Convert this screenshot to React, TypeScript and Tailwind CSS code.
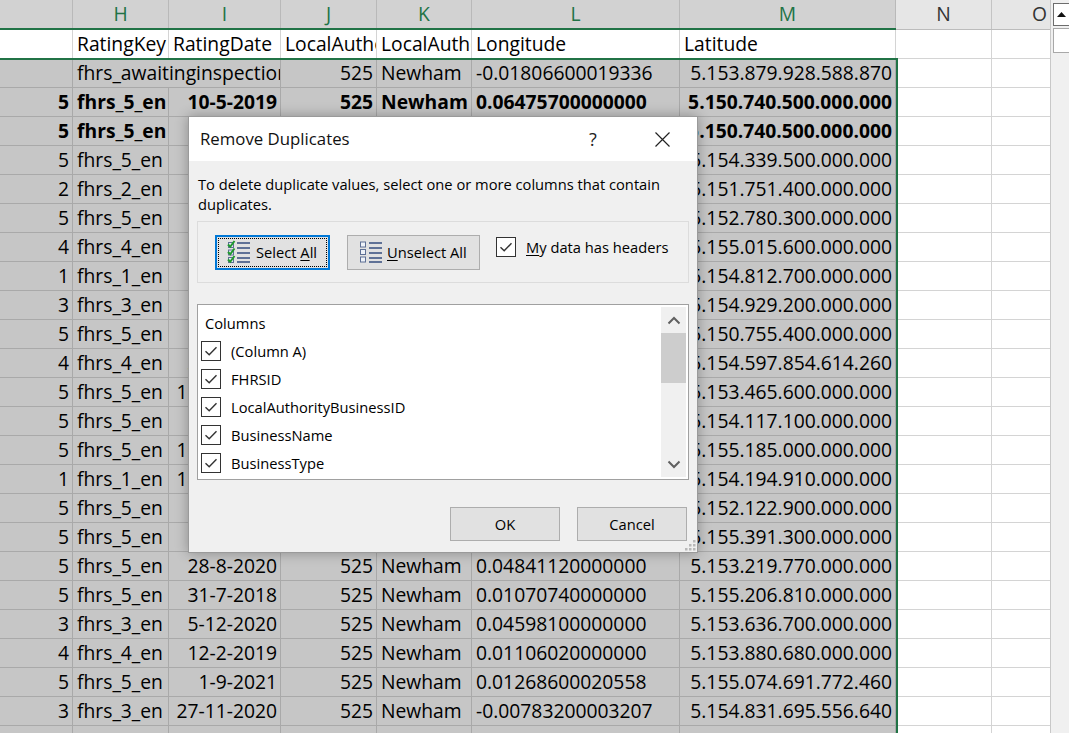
import React from "react"

const SHEET_FONT = { fontFamily: '"Open Sans", "Noto Sans", sans-serif' }
const UI_FONT = { fontFamily: '"Open Sans", "Noto Sans", sans-serif' }

type Row = [string, string, string, string, string, string, string]

const ROWS: Row[] = [
  ["", "fhrs_awaitinginspection", "", "525", "Newham", "-0.01806600019336", "5.153.879.928.588.870"],
  ["5", "fhrs_5_en", "10-5-2019", "525", "Newham", "0.06475700000000", "5.150.740.500.000.000"],
  ["5", "fhrs_5_en", "10-5-2019", "525", "Newham", "0.06475700000000", "5.150.740.500.000.000"],
  ["5", "fhrs_5_en", "8-3-2019", "525", "Newham", "0.03970600000000", "5.154.339.500.000.000"],
  ["2", "fhrs_2_en", "6-11-2019", "525", "Newham", "0.05437200000000", "5.151.751.400.000.000"],
  ["5", "fhrs_5_en", "4-3-2019", "525", "Newham", "0.02587400000000", "5.152.780.300.000.000"],
  ["4", "fhrs_4_en", "8-10-2019", "525", "Newham", "0.04226300000000", "5.155.015.600.000.000"],
  ["1", "fhrs_1_en", "7-6-2021", "525", "Newham", "0.03371400000000", "5.154.812.700.000.000"],
  ["3", "fhrs_3_en", "2-5-2019", "525", "Newham", "0.02415500000000", "5.154.929.200.000.000"],
  ["5", "fhrs_5_en", "5-12-2019", "525", "Newham", "0.06652100000000", "5.150.755.400.000.000"],
  ["4", "fhrs_4_en", "3-12-2019", "525", "Newham", "0.05183725309372", "5.154.597.854.614.260"],
  ["5", "fhrs_5_en", "11-12-2019", "525", "Newham", "0.00898600000000", "5.153.465.600.000.000"],
  ["5", "fhrs_5_en", "9-8-2019", "525", "Newham", "0.03044100000000", "5.154.117.100.000.000"],
  ["5", "fhrs_5_en", "10-10-2019", "525", "Newham", "0.01915800000000", "5.155.185.000.000.000"],
  ["1", "fhrs_1_en", "18-11-2019", "525", "Newham", "0.05514700000000", "5.154.194.910.000.000"],
  ["5", "fhrs_5_en", "1-3-2020", "525", "Newham", "0.04312600000000", "5.152.122.900.000.000"],
  ["5", "fhrs_5_en", "4-8-2021", "525", "Newham", "0.02256800000000", "5.155.391.300.000.000"],
  ["5", "fhrs_5_en", "28-8-2020", "525", "Newham", "0.04841120000000", "5.153.219.770.000.000"],
  ["5", "fhrs_5_en", "31-7-2018", "525", "Newham", "0.01070740000000", "5.155.206.810.000.000"],
  ["3", "fhrs_3_en", "5-12-2020", "525", "Newham", "0.04598100000000", "5.153.636.700.000.000"],
  ["4", "fhrs_4_en", "12-2-2019", "525", "Newham", "0.01106020000000", "5.153.880.680.000.000"],
  ["5", "fhrs_5_en", "1-9-2021", "525", "Newham", "0.01268600020558", "5.155.074.691.772.460"],
  ["3", "fhrs_3_en", "27-11-2020", "525", "Newham", "-0.00783200003207", "5.154.831.695.556.640"],
  ["", "", "", "", "", "", ""],
]

const COLUMN_LIST = ["(Column A)", "FHRSID", "LocalAuthorityBusinessID", "BusinessName", "BusinessType"]

const cellBase = "shrink-0 h-full overflow-hidden whitespace-nowrap flex items-center border-r border-b"
const selCell = `${cellBase} bg-[#c6c6c6] border-[#a9a9a9]`
const whiteCell = `${cellBase} bg-white border-[#d4d4d4]`

function DataRow({ row, bold }: { row: Row; bold?: boolean }) {
  const [g, h, i, j, k, l, m] = row
  const c = selCell
  const span = i === "" && h.length > 14
  return (
    <div className={`flex h-[29px] text-[19.3px] text-black ${bold ? "font-bold" : ""}`}>
      <div className={`${c} w-[73px] justify-end pr-[3px]`}>{g}</div>
      {span ? (
        <div className={`${c} w-[208px] pl-[4px]`}>{h}</div>
      ) : (
        <>
          <div className={`${c} w-[96px] pl-[4px]`}>{h}</div>
          <div className={`${c} w-[112px] justify-end pr-[3px]`}>{i}</div>
        </>
      )}
      <div className={`${c} w-[96px] justify-end pr-[3px]`}>{j}</div>
      <div className={`${c} w-[95px] pl-[4px]`}>{k}</div>
      <div className={`${c} w-[208px] pl-[4px]`}>{l}</div>
      <div className={`${c} w-[216px] justify-end pr-[3px]`}>{m}</div>
      <div className={`${whiteCell} w-[96px]`} />
      <div className={`${whiteCell} w-[96px]`} />
    </div>
  )
}

function HeaderRow() {
  const sel = "shrink-0 h-full flex items-center justify-center border-r border-[#b9b9b9] bg-[#d2d2d2] text-[#217346]"
  const plain = "shrink-0 h-full flex items-center justify-center border-r border-[#c4c4c4] bg-[#e6e6e6] text-[#333]"
  return (
    <div className="flex h-[30px] text-[19.3px]">
      <div className="flex border-b-2 border-[#217346]">
        <div className={`${sel} w-[73px]`} />
        <div className={`${sel} w-[96px]`}>H</div>
        <div className={`${sel} w-[112px]`}>I</div>
        <div className={`${sel} w-[96px]`}>J</div>
        <div className={`${sel} w-[95px]`}>K</div>
        <div className={`${sel} w-[208px]`}>L</div>
        <div className={`${sel} w-[216px]`}>M</div>
      </div>
      <div className="flex border-b border-[#bcbcbc]">
        <div className={`${plain} w-[96px]`}>N</div>
        <div className={`${plain} w-[96px]`}>O</div>
      </div>
    </div>
  )
}

function TitleRow() {
  const c = whiteCell
  return (
    <div className="flex h-[29px] text-[19.3px] text-black">
      <div className={`${c} w-[73px]`} />
      <div className={`${c} w-[96px] pl-[4px]`}>RatingKey</div>
      <div className={`${c} w-[112px] pl-[4px]`}>RatingDate</div>
      <div className={`${c} w-[96px] pl-[4px]`}>LocalAuthorityCode</div>
      <div className={`${c} w-[95px] pl-[4px]`}>LocalAuthorityName</div>
      <div className={`${c} w-[208px] pl-[4px]`}>Longitude</div>
      <div className={`${c} w-[216px] pl-[4px]`}>Latitude</div>
      <div className={`${c} w-[96px]`} />
      <div className={`${c} w-[96px]`} />
    </div>
  )
}

function SelectAllIcon() {
  return (
    <svg width="24" height="24" viewBox="0 0 24 24">
      {[1, 8.5, 16].map((y) => (
        <g key={y}>
          <rect x="1.5" y={y + 1.5} width="5" height="5" fill="#dfe6f2" stroke="#5d6f94" strokeWidth="1" />
          <path d={`M1 ${y + 3.5} L3.2 ${y + 5.8} L7.5 ${y}`} fill="none" stroke="#1f9a2c" strokeWidth="2" />
        </g>
      ))}
      {[2, 7, 12, 17, 21].map((y) => (
        <rect key={y} x="10" y={y} width="13" height="2" fill="#5f7196" />
      ))}
    </svg>
  )
}

function UnselectAllIcon() {
  return (
    <svg width="24" height="24" viewBox="0 0 24 24">
      {[2, 9.5, 17].map((y) => (
        <rect key={y} x="1.5" y={y} width="5" height="5" fill="#eef2f8" stroke="#5d6f94" strokeWidth="1" />
      ))}
      {[2, 7, 12, 17, 21].map((y) => (
        <rect key={y} x="10" y={y} width="13" height="2" fill="#5f7196" />
      ))}
    </svg>
  )
}

function CheckBox() {
  return (
    <svg width="20" height="20" viewBox="0 0 20 20" className="shrink-0">
      <rect x="0.5" y="0.5" width="19" height="19" fill="white" stroke="#333" strokeWidth="1" />
      <path d="M4.5 10.2 L8.2 13.8 L15.5 6.3" fill="none" stroke="#333" strokeWidth="1.4" />
    </svg>
  )
}

function Chevron({ up }: { up?: boolean }) {
  return (
    <svg width="14" height="9" viewBox="0 0 14 9">
      <path d={up ? "M1.5 7.5 L7 2 L12.5 7.5" : "M1.5 1.5 L7 7 L12.5 1.5"} fill="none" stroke="#606060" strokeWidth="2" />
    </svg>
  )
}

function Dialog() {
  return (
    <div
      className="absolute left-[188px] top-[116px] flex h-[437px] w-[510px] flex-col border border-[#9a9a9a] bg-[#f0f0f0] text-[14.7px] text-black shadow-[0_0_12px_rgba(0,0,0,0.3)]"
      style={UI_FONT}
    >
      {/* title bar */}
      <div className="flex h-[44px] shrink-0 items-center bg-white pl-[11px] pr-[12px]">
        <span className="text-[16.8px] text-[#111]">Remove Duplicates</span>
        <div className="flex-1" />
        <div className="flex h-[30px] w-[46px] items-center justify-center text-[18px] text-[#222]">?</div>
        <div className="ml-[23px] flex h-[30px] w-[46px] items-center justify-center">
          <svg width="15" height="15" viewBox="0 0 15 15">
            <path d="M0.5 0.5 L14.5 14.5 M14.5 0.5 L0.5 14.5" stroke="#222" strokeWidth="1.2" />
          </svg>
        </div>
      </div>

      <div className="flex flex-1 flex-col px-[8px]">
        <p className="pl-[1px] pt-[13px] leading-[20px]">
          To delete duplicate values, select one or more columns that contain duplicates.
        </p>

        {/* options group */}
        <div className="mt-[7px] flex h-[62px] items-center border border-[#dcdcdc] pl-[17px]">
          <div className="flex h-[35px] w-[115px] items-center border-2 border-[#0078d7] bg-[#e1e1e1] p-[1px]">
            <div className="flex h-full w-full items-center border border-dotted border-black pl-[8px]">
              <SelectAllIcon />
              <span className="ml-[5px]">
                Select <span className="underline underline-offset-2">A</span>ll
              </span>
            </div>
          </div>
          <div className="ml-[17px] flex h-[35px] w-[133px] items-center border border-[#adadad] bg-[#e1e1e1] pl-[11px]">
            <UnselectAllIcon />
            <span className="ml-[4px]">
              <span className="underline underline-offset-2">U</span>nselect All
            </span>
          </div>
          <div className="mb-[10px] ml-[16px] flex items-center">
            <CheckBox />
            <span className="ml-[10px]">
              <span className="underline underline-offset-2">M</span>y data has headers
            </span>
          </div>
        </div>

        {/* columns list */}
        <div className="mt-[21px] flex h-[176px] border border-[#a0a0a0] bg-white">
          <div className="flex-1 pt-[4px]">
            <div className="flex h-[28px] items-center pl-[7px]">Columns</div>
            {COLUMN_LIST.map((name) => (
              <div key={name} className="flex h-[28px] items-center pl-[3px]">
                <CheckBox />
                <span className="ml-[10px]">{name}</span>
              </div>
            ))}
          </div>
          <div className="my-[2px] mr-[2px] flex w-[25px] flex-col bg-[#f0f0f0]">
            <div className="flex h-[26px] items-center justify-center">
              <Chevron up />
            </div>
            <div className="h-[50px] bg-[#cdcdcd]" />
            <div className="flex-1" />
            <div className="flex h-[26px] items-center justify-center">
              <Chevron />
            </div>
          </div>
        </div>

        {/* buttons */}
        <div className="mt-[27px] flex justify-end gap-[17px] pr-[2px]">
          <div className="flex h-[34px] w-[110px] items-center justify-center border border-[#adadad] bg-[#e1e1e1]">OK</div>
          <div className="flex h-[34px] w-[110px] items-center justify-center border border-[#adadad] bg-[#e1e1e1]">Cancel</div>
        </div>
      </div>

      {/* resize grip */}
      <svg width="12" height="12" viewBox="0 0 12 12" className="absolute bottom-[1px] right-[1px]">
        {[
          [9, 1], [9, 5], [5, 5], [9, 9], [5, 9], [1, 9],
        ].map(([x, y]) => (
          <rect key={`${x}-${y}`} x={x} y={y} width="2.5" height="2.5" fill="#b8b8b8" />
        ))}
      </svg>
    </div>
  )
}

export default function App() {
  return (
    <div className="relative flex h-[733px] w-[1069px] overflow-hidden bg-white" style={SHEET_FONT}>
      {/* sheet */}
      <div className="relative w-[1050px] shrink-0 overflow-hidden">
        <HeaderRow />
        <TitleRow />
        {ROWS.map((row, idx) => (
          <DataRow key={idx} row={row} bold={idx === 1 || idx === 2} />
        ))}
        {/* selection outline */}
        <div className="pointer-events-none absolute left-0 top-[58px] h-[700px] w-[898px] border-r-2 border-t-2 border-[#217346]" />
      </div>

      {/* vertical scrollbar */}
      <div className="flex w-[19px] shrink-0 flex-col border-l border-[#c8c8c8] bg-[#f0f0f0] pl-[2px] pt-[3px]">
        <div className="flex h-[23px] items-center justify-center border border-r-0 border-[#6d6d6d] bg-white">
          <svg width="9" height="5" viewBox="0 0 9 5">
            <path d="M0 5 L4.5 0 L9 5 Z" fill="#111" />
          </svg>
        </div>
        <div className="mt-[2px] h-[25px] border border-r-0 border-[#a8a8a8] bg-white" />
      </div>

      <Dialog />
    </div>
  )
}
